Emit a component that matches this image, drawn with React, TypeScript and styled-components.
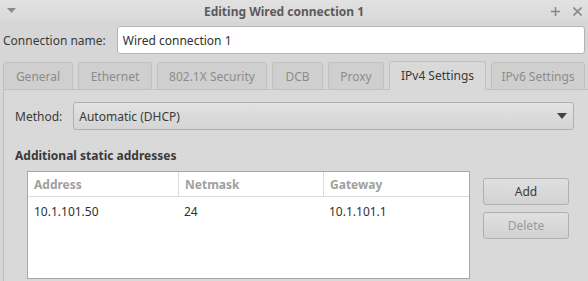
import React from "react";
import styled, { createGlobalStyle } from "styled-components";

const Global = createGlobalStyle`
  html, body { margin: 0; padding: 0; }
  body {
    width: 588px; height: 281px; overflow: hidden;
    background: #d6d6d6;
    font-family: "Noto Sans", "DejaVu Sans", sans-serif;
    font-size: 12px;
    color: #3a3a3a;
  }
`;

const Window = styled.div`
  display: flex;
  flex-direction: column;
  width: 588px;
  height: 281px;
  background: #d6d6d6;
`;

const TitleBar = styled.div`
  height: 22px;
  display: grid;
  grid-template-columns: 40px 1fr 60px;
  align-items: center;
  background: linear-gradient(#e1e1e1, #d9d9d9);
`;

const Title = styled.div`
  text-align: center;
  font-weight: bold;
  font-size: 12px;
  color: #5b5b5b;
`;

const TitleLeft = styled.div`
  display: flex;
  padding-left: 7px;
  align-items: center;
`;

const TitleRight = styled.div`
  display: flex;
  justify-content: flex-end;
  gap: 13px;
  padding-right: 6px;
  align-items: center;
`;

const NameRow = styled.div`
  display: flex;
  align-items: center;
  padding: 4px 3px 0 3px;
  gap: 11px;
`;

const Label = styled.span`
  color: #3a3a3a;
  white-space: nowrap;
`;

const Entry = styled.div`
  flex: 1;
  height: 28px;
  box-sizing: border-box;
  border: 1px solid #b4b4b4;
  border-radius: 3px;
  background: #ffffff;
  display: flex;
  align-items: center;
  padding-left: 5px;
  color: #303030;
`;

const TabStrip = styled.div`
  display: flex;
  padding: 7px 0 0 3px;
  gap: 5px;
  align-items: flex-end;
  position: relative;
  z-index: 1;
`;

const Tab = styled.div<{ $active?: boolean; $w: number }>`
  width: ${(p) => p.$w}px;
  box-sizing: border-box;
  height: ${(p) => (p.$active ? 29 : 28)}px;
  border: 1px solid #c0c0c0;
  border-bottom: ${(p) => (p.$active ? "1px solid #d9d9d9" : "1px solid #c0c0c0")};
  border-radius: 3px 3px 0 0;
  background: ${(p) => (p.$active ? "#d9d9d9" : "#cfcfcf")};
  color: ${(p) => (p.$active ? "#3a3a3a" : "#8c8c8c")};
  display: flex;
  align-items: center;
  justify-content: center;
  margin-bottom: -1px;
  white-space: nowrap;
`;

const Panel = styled.div`
  flex: 1;
  margin: 0 0 0 3px;
  border: 1px solid #c0c0c0;
  border-bottom: none;
  border-right: none;
  background: #d9d9d9;
  padding: 12px 14px 0 11px;
  display: flex;
  flex-direction: column;
`;

const MethodRow = styled.div`
  display: flex;
  align-items: center;
  gap: 11px;
`;

const Combo = styled.div`
  flex: 1;
  height: 28px;
  box-sizing: border-box;
  border: 1px solid #b0b0b0;
  border-radius: 3px;
  background: linear-gradient(#e2e2e2, #d4d4d4);
  display: flex;
  align-items: center;
  justify-content: space-between;
  padding: 0 6px 0 5px;
  color: #3a3a3a;
`;

const Heading = styled.div`
  font-weight: bold;
  margin-top: 17px;
  color: #3a3a3a;
`;

const AddrArea = styled.div`
  display: flex;
  gap: 13px;
  margin-top: 7px;
  padding-left: 12px;
`;

const Table = styled.div`
  width: 443px;
  height: 108px;
  box-sizing: border-box;
  border: 1px solid #a8a8a8;
  background: #ffffff;
  display: flex;
  flex-direction: column;
`;

const Row = styled.div<{ $header?: boolean }>`
  display: grid;
  grid-template-columns: 150px 145px 1fr;
  height: ${(p) => (p.$header ? 24 : 28)}px;
  border-bottom: ${(p) => (p.$header ? "1px solid #dcdcdc" : "none")};
`;

const Cell = styled.div<{ $header?: boolean }>`
  display: flex;
  align-items: center;
  padding-left: 6px;
  border-left: ${(p) => (p.$header ? "1px solid #dcdcdc" : "none")};
  &:first-child { border-left: none; }
  color: ${(p) => (p.$header ? "#a0a0a0" : "#303030")};
  font-weight: ${(p) => (p.$header ? "bold" : "normal")};
`;

const Buttons = styled.div`
  display: flex;
  flex-direction: column;
  gap: 7px;
  margin-top: 7px;
`;

const Button = styled.div<{ $disabled?: boolean }>`
  width: 86px;
  height: 27px;
  box-sizing: border-box;
  border: 1px solid #b0b0b0;
  border-radius: 3px;
  background: linear-gradient(#e0e0e0, #d2d2d2);
  display: flex;
  align-items: center;
  justify-content: center;
  color: ${(p) => (p.$disabled ? "#9a9a9a" : "#3a3a3a")};
`;

const tabs: { label: string; w: number; active?: boolean }[] = [
  { label: "General", w: 70 },
  { label: "Ethernet", w: 74 },
  { label: "802.1X Security", w: 110 },
  { label: "DCB", w: 51 },
  { label: "Proxy", w: 56 },
  { label: "IPv4 Settings", w: 97, active: true },
  { label: "IPv6 Settings", w: 94 },
];

export default function App() {
  return (
    <>
      <Global />
      <Window>
        <TitleBar>
          <TitleLeft>
            <svg width="9" height="6" viewBox="0 0 9 6">
              <path d="M0 0 L9 0 L4.5 5 Z" fill="#8a8a8a" />
            </svg>
          </TitleLeft>
          <Title>Editing Wired connection 1</Title>
          <TitleRight>
            <svg width="9" height="9" viewBox="0 0 9 9">
              <path d="M4.5 0 V9 M0 4.5 H9" stroke="#8a8a8a" strokeWidth="1.6" />
            </svg>
            <svg width="9" height="9" viewBox="0 0 9 9">
              <path d="M0.5 0.5 L8.5 8.5 M8.5 0.5 L0.5 8.5" stroke="#8a8a8a" strokeWidth="1.6" />
            </svg>
          </TitleRight>
        </TitleBar>
        <NameRow>
          <Label>Connection name:</Label>
          <Entry>Wired connection 1</Entry>
        </NameRow>
        <TabStrip>
          {tabs.map((t) => (
            <Tab key={t.label} $active={t.active} $w={t.w}>
              {t.label}
            </Tab>
          ))}
        </TabStrip>
        <Panel>
          <MethodRow>
            <Label>Method:</Label>
            <Combo>
              <span>Automatic (DHCP)</span>
              <svg width="10" height="6" viewBox="0 0 10 6">
                <path d="M0 0 L10 0 L5 6 Z" fill="#404040" />
              </svg>
            </Combo>
          </MethodRow>
          <Heading>Additional static addresses</Heading>
          <AddrArea>
            <Table>
              <Row $header>
                <Cell $header>Address</Cell>
                <Cell $header>Netmask</Cell>
                <Cell $header>Gateway</Cell>
              </Row>
              <Row>
                <Cell>10.1.101.50</Cell>
                <Cell>24</Cell>
                <Cell>10.1.101.1</Cell>
              </Row>
            </Table>
            <Buttons>
              <Button>Add</Button>
              <Button $disabled>Delete</Button>
            </Buttons>
          </AddrArea>
        </Panel>
      </Window>
    </>
  );
}
